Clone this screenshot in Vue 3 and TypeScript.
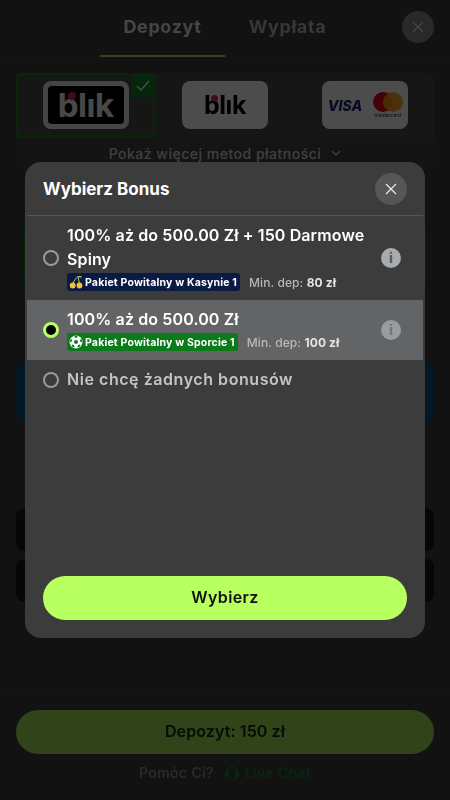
<script setup lang="ts">
interface BonusOption {
  id: number
  title: string
  badge?: string
  badgeKind?: 'casino' | 'sport'
  minDep?: string
}

const selectedId = 2

const options: BonusOption[] = [
  { id: 1, title: '100% aż do 500.00 Zł + 150 Darmowe Spiny', badge: 'Pakiet Powitalny w Kasynie 1', badgeKind: 'casino', minDep: '80 zł' },
  { id: 2, title: '100% aż do 500.00 Zł', badge: 'Pakiet Powitalny w Sporcie 1', badgeKind: 'sport', minDep: '100 zł' },
  { id: 3, title: 'Nie chcę żadnych bonusów' },
]
</script>

<template>
  <div class="page">
    <div class="under">
      <header class="top">
        <div class="tabs">
          <div class="tab active">Depozyt</div>
          <div class="tab">Wypłata</div>
        </div>
        <button class="page-close">
          <svg width="14" height="14" viewBox="0 0 14 14"><path d="M2 2l10 10M12 2L2 12" stroke="currentColor" stroke-width="1.4" /></svg>
        </button>
      </header>

      <main class="content">
        <div class="methods">
          <div class="method selected">
            <span class="tick">
              <svg width="14" height="11" viewBox="0 0 14 11"><path d="M1 6l4 4 8-9" fill="none" stroke="currentColor" stroke-width="1.4" /></svg>
            </span>
            <div class="logo logo-dark">
              <div class="blik-inner"><span class="blik light">bl&#305;k<i class="dot"></i></span></div>
            </div>
          </div>
          <div class="method">
            <div class="logo"><span class="blik">bl&#305;k<i class="dot"></i></span></div>
          </div>
          <div class="method">
            <div class="logo cards">
              <span class="visa">VISA</span>
              <div class="mc">
                <div class="mc-circles"><i class="mc-red"></i><i class="mc-yellow"></i></div>
                <span class="mc-name">mastercard</span>
              </div>
            </div>
          </div>
        </div>
        <div class="more">
          Pokaż więcej metod płatności
          <svg width="10" height="6" viewBox="0 0 10 6"><path d="M1 1l4 4 4-4" fill="none" stroke="currentColor" stroke-width="1.2" /></svg>
        </div>
        <div class="amount-box"></div>
        <div class="promo"></div>
        <div class="row"></div>
        <div class="row"></div>
      </main>

      <footer class="bottom">
        <button class="deposit">Depozyt: 150 zł</button>
        <div class="help">
          <span>Pomóc Ci?</span>
          <span class="chat">
            <svg width="14" height="16" viewBox="0 0 14 16" fill="none" stroke="currentColor" stroke-width="1.6">
              <path d="M2 9V7a5 5 0 0 1 10 0v2" />
              <rect x="1" y="8" width="2.4" height="4" rx="1" fill="currentColor" />
              <rect x="10.6" y="8" width="2.4" height="4" rx="1" fill="currentColor" />
              <path d="M12 12c0 2-2 2.6-4 2.6" />
            </svg>
            Live Chat
          </span>
        </div>
      </footer>
    </div>

    <div class="overlay">
      <section class="modal">
        <div class="modal-head">
          <h2>Wybierz Bonus</h2>
          <button class="modal-close">
            <svg width="12" height="12" viewBox="0 0 12 12"><path d="M1 1l10 10M11 1L1 11" stroke="currentColor" stroke-width="1.3" /></svg>
          </button>
        </div>

        <div class="list">
          <div v-for="opt in options" :key="opt.id" class="option" :class="{ on: opt.id === selectedId, plain: !opt.badge }">
            <span class="radio"></span>
            <div class="body">
              <div class="title">{{ opt.title }}</div>
              <div v-if="opt.badge" class="meta">
                <span class="badge" :class="opt.badgeKind">
                  <svg v-if="opt.badgeKind === 'casino'" width="14" height="14" viewBox="0 0 14 14">
                    <path d="M4 8.500C5 5 7 3 9 1.500c0.500 2.500 1 5 1.500 7" fill="none" stroke="#b9d24a" stroke-width="1" />
                    <path d="M9 1.500c1.500-0.800 3-0.500 4 0.500-1.200 0.800-2.700 0.800-4-0.500z" fill="#b9d24a" />
                    <circle cx="3.700" cy="10.500" r="2.900" fill="#f2c230" />
                    <circle cx="10.500" cy="10.500" r="2.900" fill="#f2c230" />
                  </svg>
                  <svg v-else width="14" height="14" viewBox="0 0 14 14">
                    <circle cx="7" cy="7" r="6.500" fill="#fff" />
                    <path d="M7 4.800l2.100 1.500-0.800 2.500H5.700l-0.800-2.500z" fill="#0a7a1a" />
                    <path d="M7 0.700l2 1.100-2 1.200-2-1.200zM13 5l-0.200 2.500-1.800-1.200 0.300-2.200zM1 5l0.200 2.500 1.800-1.200-0.300-2.200zM3.500 12l-0.700-2.400 2 0.300 1 2.300zM10.500 12l0.700-2.400-2 0.300-1 2.300z" fill="#0a7a1a" />
                  </svg>
                  {{ opt.badge }}
                </span>
                <span class="min">Min. dep: <b>{{ opt.minDep }}</b></span>
              </div>
            </div>
            <span v-if="opt.badge" class="info">i</span>
          </div>
        </div>

        <button class="choose">Wybierz</button>
      </section>
    </div>
  </div>
</template>

<style>
html, body {
  margin: 0;
  background: #131313;
}
</style>

<style scoped>
.page {
  position: relative;
  width: 450px;
  height: 800px;
  overflow: hidden;
  background: #3c3c3c;
  font-family: Inter, "Noto Sans", sans-serif;
}

.under {
  height: 100%;
  display: flex;
  flex-direction: column;
  filter: blur(0.6px);
}

button {
  border: none;
  font-family: inherit;
  padding: 0;
}

.top {
  position: relative;
  height: 57px;
  flex: none;
  display: flex;
  justify-content: center;
  box-sizing: border-box;
  border-bottom: 1px solid #484848;
}

.tabs {
  display: flex;
}

.tab {
  width: 125px;
  height: 57px;
  box-sizing: border-box;
  padding-top: 15px;
  text-align: center;
  font-size: 18px;
  line-height: 24px;
  font-weight: 700;
  letter-spacing: 0.6px;
  color: #b8b8b8;
}

.tab.active {
  color: #e8e8e8;
  border-bottom: 2px solid #c4e86a;
}

.page-close {
  position: absolute;
  top: 11px;
  right: 16px;
  width: 32px;
  height: 32px;
  border-radius: 50%;
  display: flex;
  align-items: center;
  justify-content: center;
  background: #8a8a8a;
  color: #e4e4e4;
}

.content {
  flex: 1;
  display: flex;
  flex-direction: column;
  padding: 16px 16px 0;
}

.methods {
  display: grid;
  grid-template-columns: repeat(3, 1fr);
  height: 64px;
  background: #4a4a4a;
  border-radius: 6px 6px 0 0;
}

.method {
  position: relative;
  display: flex;
  align-items: center;
  justify-content: center;
  padding-left: 1px;
  border-right: 1px solid #424242;
  box-sizing: border-box;
}

.method:last-child {
  border-right: none;
}

.method.selected {
  padding-left: 0;
  border: 2px solid #12801c;
  border-radius: 4px 0 0 0;
}

.tick {
  position: absolute;
  top: -2px;
  right: -2px;
  width: 24px;
  height: 24px;
  display: flex;
  align-items: center;
  justify-content: center;
  background: #12801c;
  color: #fff;
  border-radius: 0 0 0 4px;
}

.logo {
  width: 86px;
  height: 48px;
  box-sizing: border-box;
  border-radius: 8px;
  background: #ffffff;
  display: flex;
  align-items: center;
  justify-content: center;
}

.logo-dark {
  background: #e8e8e8;
  padding: 5px;
}

.blik-inner {
  width: 100%;
  height: 100%;
  border-radius: 4px;
  background: #000;
  display: flex;
  align-items: center;
  justify-content: center;
}

.blik {
  position: relative;
  font-size: 25px;
  line-height: 28px;
  font-weight: 700;
  letter-spacing: -0.5px;
  color: #000;
}

.blik.light {
  font-size: 33px;
  line-height: 34px;
  color: #f0f0f0;
}

.dot {
  position: absolute;
  top: 4px;
  left: 7px;
  width: 7px;
  height: 7px;
  border-radius: 50%;
  background: #e0224e;
}

.blik.light .dot {
  top: 4px;
  left: 10px;
  width: 8px;
  height: 8px;
}

.cards {
  justify-content: space-between;
  padding: 0 5px 0 6px;
}

.visa {
  font-size: 14px;
  font-weight: 800;
  font-style: italic;
  color: #1a1f71;
}

.mc {
  display: flex;
  flex-direction: column;
  align-items: center;
}

.mc-circles {
  display: flex;
}

.mc-circles i {
  width: 20px;
  height: 20px;
  border-radius: 50%;
}

.mc-red {
  background: #eb001b;
}

.mc-yellow {
  background: #f79e1b;
  margin-left: -10px;
  opacity: 0.9;
}

.mc-name {
  font-size: 5px;
  line-height: 6px;
  color: #222;
}

.more {
  height: 32px;
  display: flex;
  align-items: center;
  justify-content: center;
  gap: 10px;
  font-size: 14px;
  font-weight: 500;
  letter-spacing: 0.5px;
  color: #d8d8d8;
  background: #444;
}

.amount-box {
  height: 66px;
  margin: 53px 8px 0;
  border: 1px solid #12801c;
  border-radius: 8px;
}

.promo {
  height: 58px;
  margin-top: 73px;
  border-radius: 8px;
  background: #0a5080;
}

.row {
  height: 43px;
  margin-top: 8px;
  border-radius: 8px;
  background: #1a1a1a;
}

.promo + .row {
  margin-top: 87px;
}

.bottom {
  height: 107px;
  flex: none;
  box-sizing: border-box;
  padding: 16px 16px 0;
  border-top: 1px solid #484848;
}

.deposit {
  display: block;
  width: 100%;
  height: 44px;
  padding-bottom: 2px;
  border-radius: 22px;
  background: #a2e054;
  color: #182616;
  font-size: 16px;
  font-weight: 600;
  letter-spacing: 0.1px;
}

.help {
  display: flex;
  justify-content: center;
  gap: 11px;
  margin-top: 10px;
  font-size: 14px;
  line-height: 18px;
  font-weight: 500;
  letter-spacing: 0.4px;
  color: #949494;
}

.chat {
  display: flex;
  align-items: center;
  gap: 6px;
  color: #128a28;
}

.overlay {
  position: absolute;
  inset: 0;
  display: flex;
  align-items: center;
  justify-content: center;
  background: rgba(0, 0, 0, 0.7);
}

.modal {
  width: 400px;
  height: 476px;
  box-sizing: border-box;
  display: flex;
  flex-direction: column;
  padding: 0 2px 18px;
  border-radius: 16px;
  background: #3c3c3c;
}

.modal-head {
  height: 54px;
  flex: none;
  box-sizing: border-box;
  display: flex;
  align-items: center;
  justify-content: space-between;
  padding: 0 16px;
  border-bottom: 1px solid #565656;
}

.modal-head h2 {
  margin: 0;
  font-size: 17px;
  font-weight: 700;
  color: #fff;
}

.modal-close {
  width: 32px;
  height: 32px;
  border-radius: 50%;
  display: flex;
  align-items: center;
  justify-content: center;
  background: #565656;
  color: #e8e8e8;
}

.list {
  flex: 1;
}

.option {
  display: flex;
  align-items: center;
  gap: 8px;
  padding: 7px 22px 9px 16px;
}

.option.on {
  background: #636466;
}

.radio {
  flex: none;
  width: 16px;
  height: 16px;
  margin-top: 2px;
  box-sizing: border-box;
  border-radius: 50%;
  border: 2px solid #9a9a9a;
}

.option.on .radio {
  border: 3px solid #b8ff60;
  background: #000;
}

.body {
  flex: 1;
  min-width: 0;
}

.title {
  font-size: 16px;
  line-height: 24px;
  font-weight: 600;
  letter-spacing: 0.12px;
  color: #fff;
}

.option.plain .title {
  letter-spacing: 0.55px;
  color: #c4c4c4;
}

.meta {
  display: flex;
  align-items: center;
  gap: 9px;
  margin-top: 2px;
}

.badge {
  height: 18px;
  display: inline-flex;
  align-items: center;
  gap: 2px;
  padding: 0 3px 0 2px;
  border-radius: 3px;
  font-size: 10.5px;
  font-weight: 700;
  letter-spacing: 0.18px;
  color: #fff;
  white-space: nowrap;
}

.badge.casino {
  background: #0b1a44;
}

.badge.sport {
  background: #0a7a1a;
}

.min {
  font-size: 12px;
  font-weight: 500;
  letter-spacing: 0.1px;
  color: #b8b8b8;
  white-space: nowrap;
}

.min b {
  font-weight: 700;
  color: #e6e6e6;
}

.info {
  flex: none;
  width: 20px;
  height: 20px;
  margin-top: 2px;
  border-radius: 50%;
  background: #a8abad;
  color: #5c5c5c;
  font-size: 14px;
  line-height: 20px;
  font-weight: 800;
  text-align: center;
}

.option.on .info {
  background: #9a9da0;
  color: #747679;
}

.choose {
  width: 364px;
  height: 44px;
  flex: none;
  align-self: center;
  padding-bottom: 2px;
  border-radius: 22px;
  background: #b8ff60;
  color: #111;
  font-size: 16px;
  font-weight: 600;
  letter-spacing: 0.4px;
}
</style>
